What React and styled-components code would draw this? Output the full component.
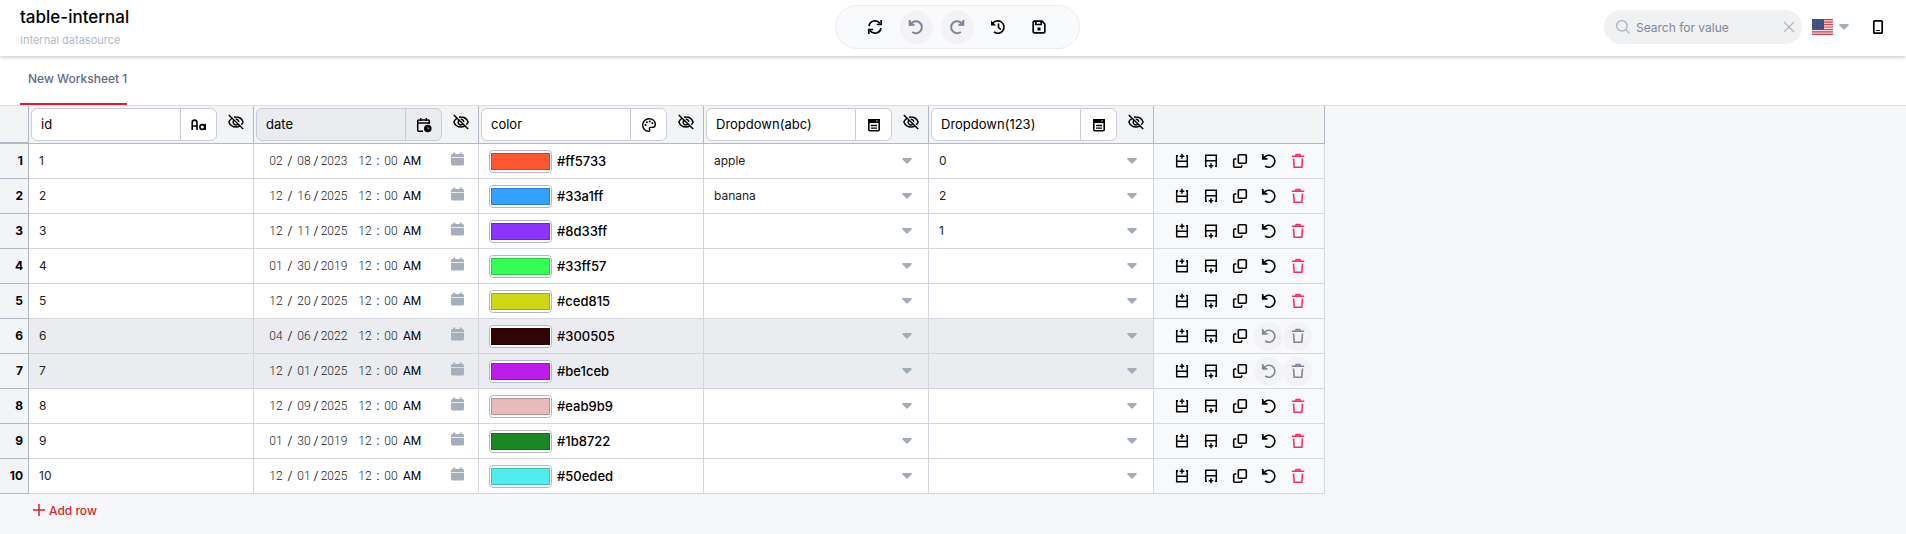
import React from 'react';
import styled, { createGlobalStyle } from 'styled-components';

const GlobalStyle = createGlobalStyle`
  *, *::before, *::after {
    box-sizing: border-box;
  }

  body {
    margin: 0;
    background-color: #f6f7f9;
    color: #000;
    font-family: Inter, 'Liberation Sans', sans-serif;
    font-size: 12px;
  }

  button, input, select {
    margin: 0;
    padding: 0;
    border: none;
    background: none;
    color: inherit;
    font: inherit;
  }

  button {
    cursor: pointer;
  }

  svg {
    display: block;
  }
`;

const Header = styled.header`
  position: relative;
  z-index: 1;
  display: grid;
  grid-template-columns: 1fr auto 1fr;
  align-items: center;
  height: 56px;
  padding: 0 12px 2px 20px;
  background-color: #fff;
  box-shadow: 0 1px 4px rgba(0, 0, 0, 0.25);
`;

const Title = styled.div`
  h1 {
    margin: 2px 0 0;
    font-size: 17px;
    line-height: 22px;
    font-weight: 500;
  }

  p {
    margin: 2px 0 0;
    color: #b4bac6;
    font-size: 11px;
    line-height: 20px;
  }
`;

const Toolbar = styled.div`
  display: flex;
  align-items: center;
  gap: 8px;
  height: 44px;
  padding: 0 23px;
  border: 1px solid #eaecf0;
  border-radius: 22px;
  background-color: #f9fafc;
`;

const IconButton = styled.button`
  display: flex;
  align-items: center;
  justify-content: center;
  width: ${({ $size }) => $size}px;
  height: ${({ $size }) => $size}px;
  border-radius: 50%;
  color: ${({ $danger }) => ($danger ? '#fb2c62' : '#000')};

  &:disabled {
    background-color: #f3f3f6;
    color: #7d8799;
    cursor: default;
  }
`;

const HeaderRight = styled.div`
  display: flex;
  align-items: center;
  justify-content: flex-end;
`;

const Search = styled.label`
  display: flex;
  align-items: center;
  width: 198px;
  height: 34px;
  padding: 0 5px 0 11px;
  border-radius: 17px;
  background-color: #f0f1f3;
  color: #b0b8c4;

  input {
    flex: 1;
    min-width: 0;
    margin-left: 5px;
    outline: none;
    color: #7d8799;
  }

  input::placeholder {
    color: #7d8799;
    opacity: 1;
  }
`;

const Language = styled.button`
  display: flex;
  align-items: center;
  gap: 6px;
  margin: 0 13px 0 10px;
  color: #a3adba;
`;

const Tabs = styled.nav`
  display: flex;
  height: 50px;
  padding-left: 20px;
  border-bottom: 1px solid #dcdfe6;
  background-color: #fff;
`;

const Tab = styled.button`
  height: 49px;
  padding: 0 0 2px 8px;
  border-bottom: 2px solid #d91f2d;
  color: #5f6b7e;
  font-weight: 500;
`;

const Table = styled.table`
  border-collapse: separate;
  border-spacing: 0;
  table-layout: fixed;
`;

const HeadCell = styled.th`
  width: ${({ $width }) => $width}px;
  height: 38px;
  padding: 2px 0 0 2px;
  border-right: 1px solid #b0b8c4;
  border-bottom: ${({ $corner }) => ($corner ? 2 : 1)}px solid #b0b8c4;
  background-color: #f3f4f6;
  font-weight: 400;
  vertical-align: top;
`;

const ColumnHead = styled.div`
  display: flex;
  align-items: center;
`;

const ColumnField = styled.div`
  display: flex;
  width: 186px;
  height: 33px;
  border: 1px solid #c9cdd7;
  border-radius: 6px;
  background-color: ${({ $active }) => ($active ? '#ebecf0' : '#fff')};

  input {
    flex: 1;
    min-width: 0;
    padding: 0 0 2px 9px;
    outline: none;
    font-size: 13px;
  }

  button {
    display: flex;
    align-items: center;
    justify-content: center;
    width: 36px;
    border-left: 1px solid #c9cdd7;
  }
`;

const HideButton = styled.button`
  margin: 0 0 6px 11px;
`;

const RowNumber = styled.th`
  padding: 0 5px 2px 0;
  border-right: 1px solid #b0b8c4;
  border-bottom: 1px solid #b0b8c4;
  background-color: #f3f4f6;
  font-weight: 700;
  text-align: right;
`;

const Cell = styled.td`
  height: 35px;
  padding: 0;
  border-right: 1px solid #d3d6de;
  border-bottom: 1px solid #d3d6de;
  background-color: ${({ $selected }) => ($selected ? '#ebecf0' : '#fff')};
`;

const ActionsCell = styled(Cell)`
  padding-left: 1px;
  background-color: #f8f9fb;
`;

const TextInput = styled.input`
  width: 100%;
  height: 34px;
  padding: 0 0 1px 10px;
  outline: none;
  color: #222;
`;

const DateField = styled.div`
  display: flex;
  align-items: center;
  padding: 0 14px;
  color: #222;
  font-family: Roboto, 'Liberation Sans', sans-serif;

  select {
    margin-left: 4px;
    appearance: none;
    color: #000;
  }

  button {
    margin: 0 0 4px auto;
    color: #a5afbc;
  }
`;

const DatePart = styled.input`
  width: ${({ $wide }) => ($wide ? 28 : 16)}px;
  margin-left: ${({ $gap }) => ($gap ? 9 : 0)}px;
  outline: none;
  font-weight: 300;
  text-align: center;
`;

const Separator = styled.span`
  width: ${({ $width }) => $width}px;
  text-align: center;
`;

const ColorField = styled.label`
  display: flex;
  align-items: center;
  gap: 5px;
  padding-left: 10px;
  font-size: 13px;
  font-weight: 500;

  input {
    width: 63px;
    height: 23px;
    border: 1px solid #b0b8c4;
    border-radius: 4px;
    background-color: #fff;
  }

  input::-webkit-color-swatch-wrapper {
    padding: 2px 1px;
  }

  input::-webkit-color-swatch {
    border: 1px solid rgba(0, 0, 0, 0.2);
  }
`;

const SelectField = styled.label`
  display: flex;
  align-items: center;
  padding-right: 16px;
  color: #a3adba;

  select {
    flex: 1;
    height: 34px;
    padding: 0 0 2px 10px;
    appearance: none;
    outline: none;
    color: #222;
  }
`;

const Actions = styled.div`
  display: flex;
  justify-content: center;
`;

const AddRow = styled.button`
  display: flex;
  align-items: center;
  gap: 4px;
  height: 32px;
  margin-left: 33px;
  color: #d91f2d;
  font-weight: 500;
`;

const Icon = ({ size = 16, stroke = 1.4, children }) => (
  <svg
    width={size}
    height={size}
    viewBox="0 0 16 16"
    fill="none"
    stroke="currentColor"
    strokeWidth={stroke}
    aria-hidden="true"
  >
    {children}
  </svg>
);

const RefreshIcon = () => (
  <Icon stroke={1.7}>
    <path d="M2 7a6.1 6.1 0 0 1 11-2.6M14 9a6.1 6.1 0 0 1-11 2.6" />
    <path d="M14.2 1v4.5H9.8M1.8 15v-4.5h4.4" />
  </Icon>
);

const UndoIcon = ({ stroke = 2 }) => (
  <Icon stroke={stroke}>
    <path d="M3 4.7A6 6 0 1 1 4.2 13" />
    <path d="M1.7 1v4.8h4.8" />
    <path d="M1 1l5.6 5.6H1z" fill="currentColor" stroke="none" />
  </Icon>
);

const RedoIcon = () => (
  <Icon stroke={2}>
    <path d="M13 4.7A6 6 0 1 0 11.8 13" />
    <path d="M14.3 1v4.8H9.5" />
    <path d="M15 1L9.400 6.600H15z" fill="currentColor" stroke="none" />
  </Icon>
);

const HistoryIcon = () => (
  <Icon stroke={1.6}>
    <path d="M2.5 4.8A6.200 6.200 0 1 1 4 13" />
    <path d="M1 1.5l5 5H1z" fill="currentColor" stroke="none" />
    <path d="M8.5 4.5v4l2.3 2" />
  </Icon>
);

const SaveIcon = () => (
  <Icon stroke={1.7}>
    <path d="M2.2 3.2a1 1 0 0 1 1-1H11l2.8 2.8v7.8a1 1 0 0 1-1 1H3.2a1 1 0 0 1-1-1z" />
    <path d="M4.8 2.2v3.3h5.4V2.2" />
    <rect x="6.5" y="8.5" width="3" height="3" fill="currentColor" stroke="none" />
  </Icon>
);

const SearchIcon = () => (
  <Icon stroke={1.5}>
    <circle cx="6.8" cy="6.8" r="5.2" />
    <path d="M10.5 10.5l4 4" />
  </Icon>
);

const CloseIcon = () => (
  <Icon stroke={1.3}>
    <path d="M3 3l10 10M13 3L3 13" />
  </Icon>
);

const PhoneIcon = () => (
  <Icon stroke={1.7}>
    <rect x="3.8" y="1.8" width="8.4" height="12.4" rx="1" />
    <path d="M6 11.5h4" strokeWidth="1" />
  </Icon>
);

const CaretIcon = () => (
  <svg width="10" height="6" viewBox="0 0 10 6" fill="currentColor" aria-hidden="true">
    <path d="M1.2 0h7.6c.9 0 1.2.8.7 1.4L5.8 5.3c-.5.5-1.1.5-1.6 0L.5 1.4C0 .8.3 0 1.2 0z" />
  </svg>
);

const FlagIcon = () => (
  <svg width="21" height="16" viewBox="0 0 21 16" aria-hidden="true">
    <path fill="#f3dcdf" d="M0 0h21v16H0z" />
    <path
      stroke="#cf3f4c"
      strokeWidth="1.2"
      d="M0 .6h21M0 3.1h21M0 5.5h21M0 8h21M0 10.5h21M0 12.9h21M0 15.4h21"
    />
    <path fill="#3d4d7c" d="M0 0h12v10.600H0z" />
    <path stroke="#5f6d96" strokeWidth=".6" strokeDasharray="1 1" d="M1 1.6h10M1 3.5h10M1 5.4h10M1 7.2h10M1 9h10" />
  </svg>
);

const TextTypeIcon = () => (
  <Icon stroke={1.6}>
    <path d="M1.2 13V5.5a2.4 2.4 0 0 1 4.8 0V13M1.2 9H6" />
    <circle cx="11.3" cy="10" r="2.4" />
    <path d="M14.200 6.8V13" />
  </Icon>
);

const DateTypeIcon = () => (
  <Icon stroke={1.5}>
    <path d="M7 14.3H2.7a1 1 0 0 1-1-1V4a1 1 0 0 1 1-1h9.6a1 1 0 0 1 1 1v3M1.7 6h11.6M4.7 1v3M10.3 1v3" />
    <circle cx="11.8" cy="11.5" r="3.8" fill="currentColor" stroke="none" />
    <path d="M11.8 9.6v2.2h1.5" stroke="#ebecf0" strokeWidth=".6" />
  </Icon>
);

const PaletteIcon = () => (
  <Icon>
    <path d="M8 1.7c3.6 0 6.3 2.3 6.3 5.500 0 2-1.5 3.2-3.3 3.2H9.6c-1 0-1.5.9-1.1 1.8.5 1.2.3 2.1-.9 2.1C4.2 14.3 1.7 11.5 1.7 8S4.5 1.7 8 1.7z" />
    <g fill="currentColor" stroke="none">
      <circle cx="4.6" cy="8" r="1" />
      <circle cx="5.9" cy="5.3" r="1" />
      <circle cx="8.8" cy="4.4" r="1" />
      <circle cx="11.4" cy="6.3" r="1" />
    </g>
  </Icon>
);

const ListTypeIcon = () => (
  <Icon stroke={1.6}>
    <rect x="2.8" y="2.8" width="10.4" height="11" rx="1" />
    <path d="M2 2h12v4H2z" fill="currentColor" stroke="none" />
    <path d="M10 4h2" stroke="#fff" strokeWidth=".7" />
    <path d="M5 8.5h6M5 11.2h6" strokeWidth="1.3" />
  </Icon>
);

const EyeOffIcon = () => (
  <Icon stroke={1.5}>
    <path d="M4.3 4.1C2.5 5.1 1.3 6.7.9 8c1.1 2.9 3.8 5 7.1 5 1.4 0 2.7-.4 3.8-1" />
    <path d="M6 3.2A8 8 0 0 1 8 3c3.3 0 6 2.1 7.1 5a7 7 0 0 1-1.8 2.7" />
    <path d="M6 6.4a2.6 2.6 0 0 0 3.6 3.8M7.7 5.3a2.6 2.6 0 0 1 3 2.9M.8 1l14.4 14" />
  </Icon>
);

const CalendarIcon = () => (
  <svg width="13" height="14" viewBox="0 0 13 14" fill="currentColor" aria-hidden="true">
    <path d="M2.300.5h2V2h4.400V.5h2V2h.8A1.500 1.500 0 0 1 13 3.500v1.400H0V3.500A1.500 1.500 0 0 1 1.500 2h.8zM0 5.800h13v6.200a1.500 1.500 0 0 1-1.500 1.500h-10A1.500 1.500 0 0 1 0 12z" />
  </svg>
);

const InsertAboveIcon = () => (
  <Icon stroke={1.5}>
    <path d="M4 2.8H2.7v11h10.6v-11H12M2.7 8.3h10.6" />
    <path d="M8 .8v5M5.7 3.3h4.6" />
  </Icon>
);

const InsertBelowIcon = () => (
  <Icon stroke={1.5}>
    <path d="M4 13.2H2.7v-11h10.6v11H12M2.7 7.700h10.6" />
    <path d="M8 10.2v5M5.7 12.7h4.6" />
  </Icon>
);

const CopyIcon = () => (
  <Icon stroke={1.6}>
    <rect x="6.3" y="1.8" width="8" height="8.4" rx="1" />
    <path d="M4.3 6H2.7a1 1 0 0 0-1 1v6.2a1 1 0 0 0 1 1h6a1 1 0 0 0 1-1v-1" />
  </Icon>
);

const TrashIcon = () => (
  <Icon stroke={1.6}>
    <path d="M1.8 3.3h12.4M5.6 2.900l.6-1.4h3.600l.6 1.400" />
    <path d="M3.5 5.500l.7 8.8h7.600l.7-8.8" />
  </Icon>
);

const PlusIcon = () => (
  <svg width="12" height="12" viewBox="0 0 12 12" stroke="currentColor" strokeWidth="1.5" aria-hidden="true">
    <path d="M6 0v12M0 6h12" />
  </svg>
);

const columns = [
  { name: 'id', icon: TextTypeIcon },
  { name: 'date', icon: DateTypeIcon, active: true },
  { name: 'color', icon: PaletteIcon },
  { name: 'Dropdown(abc)', icon: ListTypeIcon },
  { name: 'Dropdown(123)', icon: ListTypeIcon },
];

const rows = [
  { id: 1, date: ['02', '08', '2023'], color: '#ff5733', text: 'apple', number: '0' },
  { id: 2, date: ['12', '16', '2025'], color: '#33a1ff', text: 'banana', number: '2' },
  { id: 3, date: ['12', '11', '2025'], color: '#8d33ff', number: '1' },
  { id: 4, date: ['01', '30', '2019'], color: '#33ff57' },
  { id: 5, date: ['12', '20', '2025'], color: '#ced815' },
  { id: 6, date: ['04', '06', '2022'], color: '#300505', locked: true },
  { id: 7, date: ['12', '01', '2025'], color: '#be1ceb', locked: true },
  { id: 8, date: ['12', '09', '2025'], color: '#eab9b9' },
  { id: 9, date: ['01', '30', '2019'], color: '#1b8722' },
  { id: 10, date: ['12', '01', '2025'], color: '#50eded' },
];

const DateInput = ({ date: [month, day, year] }) => (
  <DateField>
    <DatePart aria-label="Month" defaultValue={month} />
    <Separator $width={12}>/</Separator>
    <DatePart aria-label="Day" defaultValue={day} />
    <Separator $width={8}>/</Separator>
    <DatePart aria-label="Year" $wide defaultValue={year} />
    <DatePart aria-label="Hour" $gap defaultValue="12" />
    <Separator $width={10}>:</Separator>
    <DatePart aria-label="Minute" defaultValue="00" />
    <select aria-label="AM/PM" defaultValue="AM">
      <option>AM</option>
      <option>PM</option>
    </select>
    <button type="button" aria-label="Open calendar">
      <CalendarIcon />
    </button>
  </DateField>
);

const Dropdown = ({ label, value = '', options }) => (
  <SelectField>
    <select aria-label={label} defaultValue={value}>
      <option value="" />
      {options.map((option) => (
        <option key={option}>{option}</option>
      ))}
    </select>
    <CaretIcon />
  </SelectField>
);

const Row = ({ row }) => (
  <tr>
    <RowNumber scope="row">{row.id}</RowNumber>
    <Cell $selected={row.locked}>
      <TextInput aria-label="id" defaultValue={row.id} />
    </Cell>
    <Cell $selected={row.locked}>
      <DateInput date={row.date} />
    </Cell>
    <Cell $selected={row.locked}>
      <ColorField>
        <input type="color" defaultValue={row.color} />
        {row.color}
      </ColorField>
    </Cell>
    <Cell $selected={row.locked}>
      <Dropdown label="Dropdown(abc)" value={row.text} options={['apple', 'banana']} />
    </Cell>
    <Cell $selected={row.locked}>
      <Dropdown label="Dropdown(123)" value={row.number} options={['0', '1', '2']} />
    </Cell>
    <ActionsCell>
      <Actions>
        <IconButton $size={29} aria-label="Insert above">
          <InsertAboveIcon />
        </IconButton>
        <IconButton $size={29} aria-label="Insert below">
          <InsertBelowIcon />
        </IconButton>
        <IconButton $size={29} aria-label="Duplicate">
          <CopyIcon />
        </IconButton>
        <IconButton $size={29} aria-label="Revert" disabled={row.locked}>
          <UndoIcon stroke={1.6} />
        </IconButton>
        <IconButton $size={29} $danger aria-label="Delete" disabled={row.locked}>
          <TrashIcon />
        </IconButton>
      </Actions>
    </ActionsCell>
  </tr>
);

const App = () => (
  <>
    <GlobalStyle />
    <Header>
      <Title>
        <h1>table-internal</h1>
        <p>Internal datasource</p>
      </Title>

      <Toolbar>
        <IconButton $size={33} aria-label="Refresh">
          <RefreshIcon />
        </IconButton>
        <IconButton $size={33} aria-label="Undo" disabled>
          <UndoIcon />
        </IconButton>
        <IconButton $size={33} aria-label="Redo" disabled>
          <RedoIcon />
        </IconButton>
        <IconButton $size={33} aria-label="History">
          <HistoryIcon />
        </IconButton>
        <IconButton $size={33} aria-label="Save">
          <SaveIcon />
        </IconButton>
      </Toolbar>

      <HeaderRight>
        <Search>
          <SearchIcon />
          <input type="text" placeholder="Search for value" />
          <CloseIcon />
        </Search>
        <Language aria-label="Language">
          <FlagIcon />
          <CaretIcon />
        </Language>
        <IconButton $size={32} aria-label="Mobile view">
          <PhoneIcon />
        </IconButton>
      </HeaderRight>
    </Header>

    <Tabs>
      <Tab>New Worksheet 1</Tab>
    </Tabs>

    <Table>
      <thead>
        <tr>
          <HeadCell $width={29} $corner />
          {columns.map(({ name, icon: TypeIcon, active }) => (
            <HeadCell key={name} $width={225}>
              <ColumnHead>
                <ColumnField $active={active}>
                  <input aria-label="Column name" defaultValue={name} />
                  <button type="button" aria-label="Column type">
                    <TypeIcon />
                  </button>
                </ColumnField>
                <HideButton aria-label="Hide column">
                  <EyeOffIcon />
                </HideButton>
              </ColumnHead>
            </HeadCell>
          ))}
          <HeadCell $width={171} />
        </tr>
      </thead>
      <tbody>
        {rows.map((row) => (
          <Row key={row.id} row={row} />
        ))}
      </tbody>
    </Table>

    <AddRow>
      <PlusIcon />
      Add row
    </AddRow>
  </>
);

export default App;
